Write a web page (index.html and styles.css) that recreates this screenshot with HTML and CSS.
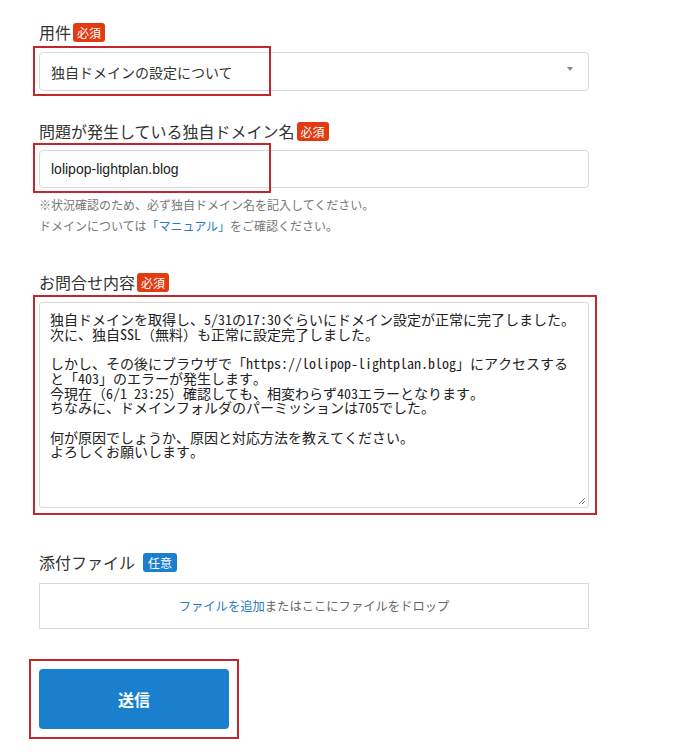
FILE: index.html
```html
<!DOCTYPE html>
<html lang="ja">
<head>
<meta charset="utf-8">
<title>お問合せ</title>
<link rel="stylesheet" href="styles.css">
</head>
<body>
<form class="form">
  <div class="field f1">
    <div class="label">用件<span class="badge req">必須</span></div>
    <div class="wrap">
      <div class="select"><span>独自ドメインの設定について</span><span class="arrow"></span></div>
      <span class="mark m-select"></span>
    </div>
  </div>

  <div class="field f2">
    <div class="label">問題が発生している独自ドメイン名<span class="badge req">必須</span></div>
    <div class="wrap">
      <div class="input">lolipop-lightplan.blog</div>
      <span class="mark m-input"></span>
    </div>
    <p class="help">※状況確認のため、必ず独自ドメイン名を記入してください。</p>
    <p class="help">ドメインについては<a class="link">「マニュアル」</a>をご確認ください。</p>
  </div>

  <div class="field f3">
    <div class="label">お問合せ内容<span class="badge req">必須</span></div>
    <div class="wrap">
      <div class="textarea">独自ドメインを取得し、5/31の17:30ぐらいにドメイン設定が正常に完了しました。
次に、独自SSL（無料）も正常に設定完了しました。

しかし、その後にブラウザで「https://lolipop-lightplan.blog」にアクセスすると「403」のエラーが発生します。
今現在（6/1 23:25）確認しても、相変わらず403エラーとなります。
ちなみに、ドメインフォルダのパーミッションは705でした。

何が原因でしょうか、原因と対応方法を教えてください。
よろしくお願いします。<svg class="grip" width="9" height="9" viewBox="0 0 9 9"><path d="M8 2L2 8M8 5L5 8" stroke="#888" stroke-width="1"/></svg></div>
      <span class="mark m-textarea"></span>
    </div>
  </div>

  <div class="field f4">
    <div class="label">添付ファイル<span class="badge opt">任意</span></div>
    <div class="drop"><span class="link">ファイルを追加</span>またはここにファイルをドロップ</div>
  </div>

  <div class="field f5">
    <div class="wrap btnwrap">
      <button type="button" class="submit">送信</button>
      <span class="mark m-btn"></span>
    </div>
  </div>
</form>
</body>
</html>
```
FILE: styles.css
```css
html, body {
  margin: 0;
  padding: 0;
  background: #fff;
}
body {
  font-family: "Noto Sans CJK JP", "Liberation Sans", sans-serif;
  color: #333;
}
.form {
  width: 550px;
  padding-left: 39px;
  padding-top: 22px;
  padding-bottom: 27px;
}
.field { display: block; }
.f2 { margin-top: 30px; }
.f3 { margin-top: 36px; }
.f4 { margin-top: 44px; }
.f5 { margin-top: 40px; }

.label {
  display: flex;
  align-items: center;
  height: 20px;
  font-size: 16px;
  line-height: 20px;
  color: #333;
  margin-bottom: 10px;
}
.f2 .label { margin-bottom: 9px; }
.f4 .label { margin-bottom: 11px; }
.badge {
  display: inline-block;
  font-size: 12px;
  line-height: 19px;
  height: 19px;
  padding: 0 4px;
  border-radius: 3px;
  color: #fff;
  margin-left: 2px;
}
.badge.req { background: #e23b12; }
.badge.opt { background: #1a7fcc; margin-left: 8px; padding: 0 5px; }

.wrap { position: relative; }
.mark {
  position: absolute;
  border: 2px solid #c3272d;
  pointer-events: none;
}
.m-select { left: -6px; top: -6px; width: 234px; height: 46px; }
.m-input { left: -6px; top: -7px; width: 234px; height: 46px; }
.m-textarea { left: -6px; top: -7px; width: 560px; height: 216px; }
.m-btn { left: -10px; top: -10px; width: 206px; height: 76px; }

.select {
  box-sizing: border-box;
  height: 39px;
  border: 1px solid #d9d9d9;
  border-radius: 4px;
  display: flex;
  align-items: center;
  justify-content: space-between;
  padding: 0 15px 0 11px;
  font-size: 14px;
  color: #333;
}
.arrow {
  width: 0;
  height: 0;
  border-left: 3px solid transparent;
  border-right: 3px solid transparent;
  border-top: 4px solid #888;
  margin-top: -6px;
}
.input {
  box-sizing: border-box;
  height: 38px;
  border: 1px solid #d9d9d9;
  border-radius: 4px;
  display: flex;
  align-items: center;
  padding-left: 11px;
  font-family: "Liberation Sans", Arial, sans-serif;
  font-size: 14px;
  color: #222;
}
.help {
  margin: 0;
  font-size: 12px;
  line-height: 21px;
  color: #777;
}
.f2 .help:first-of-type { margin-top: 6px; }
.link { color: #2a7cc0; text-decoration: none; }

.textarea {
  position: relative;
  box-sizing: border-box;
  height: 206px;
  border: 1px solid #d9d9d9;
  border-radius: 3px;
  padding: 9px 10px;
  font-family: "Noto Sans Mono CJK JP", "Noto Sans CJK JP", monospace;
  font-size: 14px;
  line-height: 14.7px;
  color: #222;
  white-space: pre-wrap;
  word-break: break-all;
}
.grip { position: absolute; right: 2px; bottom: 2px; }

.drop {
  box-sizing: border-box;
  height: 46px;
  border: 1px solid #d9d9d9;
  display: flex;
  align-items: center;
  justify-content: center;
  font-size: 12.3px;
  color: #666;
}
.btnwrap { width: 190px; }
.submit {
  display: block;
  width: 190px;
  height: 60px;
  border: none;
  border-radius: 4px;
  background: #1a7fcc;
  color: #fff;
  font-family: "Noto Sans CJK JP", sans-serif;
  font-size: 16px;
  font-weight: 700;
  padding: 0;
}
```
